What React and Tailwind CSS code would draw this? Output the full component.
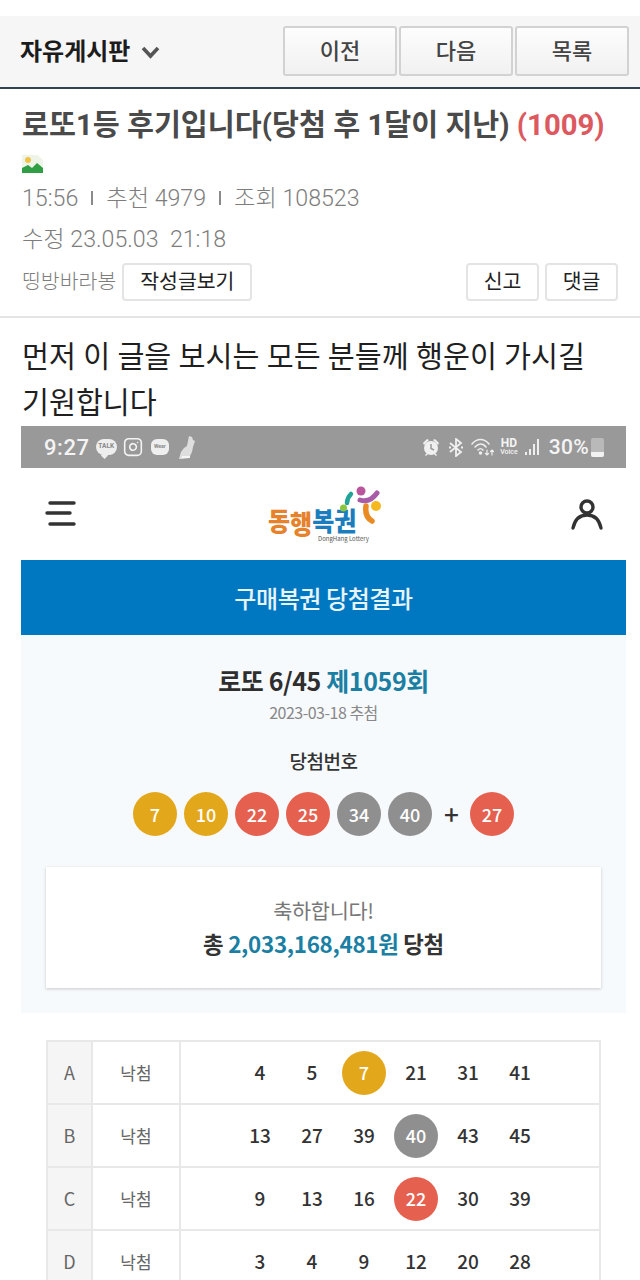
import { Instagram } from 'lucide-react'

const UI_FONT = "font-['Roboto','Noto_Sans_CJK_KR',sans-serif]"
const KR_FONT = "font-['Noto_Sans_CJK_KR','Noto_Sans',sans-serif]"

const BALL = {
  yellow: 'bg-[#e3a71c]',
  red: 'bg-[#e5604f]',
  gray: 'bg-[#8f8f8f]',
}

const WINNING = [
  [7, 'yellow'],
  [10, 'yellow'],
  [22, 'red'],
  [25, 'red'],
  [34, 'gray'],
  [40, 'gray'],
]

const ROWS = [
  { label: 'A', nums: [4, 5, 7, 21, 31, 41], hit: 7, color: 'yellow' },
  { label: 'B', nums: [13, 27, 39, 40, 43, 45], hit: 40, color: 'gray' },
  { label: 'C', nums: [9, 13, 16, 22, 30, 39], hit: 22, color: 'red' },
  { label: 'D', nums: [3, 4, 9, 12, 20, 28] },
]

const Ball = ({ n, color }) => (
  <span className={`flex h-[44px] w-[44px] items-center justify-center rounded-full text-[18px] font-medium text-white ${BALL[color]}`}>
    {n}
  </span>
)

const NavButton = ({ children }) => (
  <button className="h-[50px] w-[114px] rounded-[3px] border-2 border-[#d2d2d2] bg-gradient-to-b from-[#fdfdfd] to-[#f1f1f1] pt-[1px] text-[22px] font-medium text-[#444]">
    {children}
  </button>
)

const SmallButton = ({ children, className = '' }) => (
  <button className={`h-[38px] rounded-[4px] border-2 border-[#e4e4e4] bg-white text-[20.5px] text-[#222] ${className}`}>
    {children}
  </button>
)

const StatusBar = () => (
  <div className="flex h-[42px] items-center bg-[#999999] pl-[23px] pr-[22px] text-[#f4f4f4]">
    <span className="text-[22px] font-medium tracking-[0.6px]">9:27</span>
    <span className="relative ml-[6px] flex h-[16px] w-[21px] items-center justify-center rounded-full bg-[#eeeeee] text-[6.5px] font-bold text-[#888]">
      TALK
      <span className="absolute -bottom-[3px] left-[6px] h-[5px] w-[5px] rotate-45 bg-[#eeeeee]" />
    </span>
    <Instagram size={20} strokeWidth={1.9} className="ml-[6px]" />
    <span className="ml-[8px] flex h-[16px] w-[18px] items-center justify-center rounded-[6px] bg-[#eeeeee] text-[5px] font-bold text-[#888]">Wear</span>
    <svg width="19" height="25" viewBox="0 0 19 25" className="ml-[8px]" fill="#dedede">
      <path d="M12 1l3 1 1 3 2 1-2 6-1 5-3 6-7 1H2l2-7 3-4 3-2z" />
      <path d="M5 22h8" stroke="#f5f5f5" strokeWidth="2" />
    </svg>

    <svg width="18" height="19" viewBox="0 0 18 19" className="ml-auto" fill="#f0f0f0">
      <circle cx="9" cy="10" r="7" />
      <path d="M1 5l4-4 2 1-5 5zM17 5l-4-4-2 1 5 5zM3 17l2-2 1 1-2 2zM15 17l-2-2-1 1 2 2z" />
      <path d="M9 6v4.500l3 1.500" fill="none" stroke="#999" strokeWidth="1.500" />
    </svg>
    <svg width="16" height="19" viewBox="0 0 16 19" className="ml-[8px]" fill="none" stroke="#f0f0f0" strokeWidth="1.800">
      <path d="M2 5l11 9-5 4V1l5 4-11 9" />
      <path d="M1 9.500h2M13 9.500h2" strokeWidth="2.200" />
    </svg>
    <svg width="24" height="20" viewBox="0 0 24 20" className="ml-[7px]" fill="none" stroke="#eeeeee" strokeWidth="1.600" strokeLinecap="round">
      <path d="M1 7c5-6 12-6 17 0" />
      <path d="M4 10c3.500-4 8-4 11 0" />
      <path d="M7 13c2-2 3-2 5 0" />
      <circle cx="9.500" cy="16" r="1" fill="#eeeeee" />
      <path d="M16 13v5M14.500 16.500l1.500 1.500 1.500-1.500M21 18v-5M19.500 14.500l1.500-1.500 1.500 1.500" strokeWidth="1.200" />
    </svg>
    <span className="ml-[5px] flex flex-col items-center text-[12px] font-bold leading-[10px]">
      HD
      <span className="text-[7px] font-medium leading-[8px]">Voice</span>
    </span>
    <svg width="15" height="18" viewBox="0 0 15 18" className="ml-[7px]" fill="#eeeeee">
      <rect x="0" y="14" width="2" height="3" />
      <rect x="4" y="11" width="2" height="6" />
      <rect x="8" y="6" width="2" height="11" />
      <rect x="12" y="1" width="2" height="16" />
    </svg>
    <span className="ml-[9px] text-[21px] font-medium leading-none tracking-[0.3px]">30%</span>
    <span className="relative ml-[2px] mt-[1px] h-[19px] w-[13px] rounded-[2px] bg-[#b9b9b9]">
      <span className="absolute inset-x-0 bottom-0 h-[5px] rounded-b-[2px] bg-[#f2f2f2]" />
    </span>
  </div>
)

const LogoMark = () => (
  <svg width="42" height="40" viewBox="0 0 42 40" className="absolute right-0 top-[2px]" fill="none" strokeLinecap="round">
    <circle cx="21" cy="6" r="4.500" fill="#b9559c" />
    <path d="M20 15c6 2 12 0 17-7" stroke="#a85ba6" strokeWidth="5" />
    <path d="M11 9c-3 3-4 5-4 9" stroke="#22a39a" strokeWidth="4.500" />
    <circle cx="3.500" cy="23" r="3.500" fill="#8cc63f" />
    <circle cx="36" cy="21" r="5" fill="#f5b81f" />
    <path d="M26 21c-1 7 1 12 6 15" stroke="#e98a23" strokeWidth="5.500" />
  </svg>
)

const TopNav = () => (
  <div className="flex h-[92px] items-center justify-between bg-white pl-[24px] pr-[22px]">
    <svg width="32" height="30" viewBox="0 0 32 30" stroke="#333" strokeWidth="3.400" strokeLinecap="round">
      <path d="M5 4h24" />
      <path d="M2 14h23" />
      <path d="M5 25h24" />
    </svg>
    <div className={`relative ml-[3px] h-[62px] w-[114px] ${KR_FONT}`}>
      <div className="absolute left-0 top-[23px] flex items-start text-[24px] font-black leading-[26px]">
        <span className="origin-top scale-y-[1.1] text-[#e5822b]">동</span>
        <span className="mt-[3px] origin-top scale-y-[1.1] text-[#e5822b]">행</span>
        <span className="origin-top scale-y-[1.1] text-[#1b7dbd]">복</span>
        <span className="origin-top scale-y-[1.1] text-[#1b7dbd]">권</span>
      </div>
      <span className="absolute left-[50px] top-[52px] whitespace-nowrap text-[6px] leading-[8px] text-[#555]">DongHang Lottery</span>
      <LogoMark />
    </div>
    <svg width="34" height="34" viewBox="0 0 34 34" fill="none" stroke="#333" strokeWidth="3.400" strokeLinecap="round">
      <circle cx="17" cy="10" r="6" />
      <path d="M3 31c2-9 7-13 14-13s12 4 14 13" />
    </svg>
  </div>
)

const ResultSummary = () => (
  <div className={`flex h-[378px] flex-col items-center bg-[#f7fafd] px-[25px] ${KR_FONT}`}>
    <div className="mt-[26px] text-[25px] font-bold leading-[38px] tracking-[-0.4px] text-[#2e2e2e]">
      로또 6/45 <span className="text-[#1b7fa3]">제1059회</span>
    </div>
    <div className="mt-[2px] text-[16px] leading-[22px] tracking-[-0.5px] text-[#888]">2023-03-18 추첨</div>
    <div className="mt-[23px] text-[19px] font-medium leading-[30px] tracking-[-0.5px] text-[#333]">당첨번호</div>
    <div className="mt-[16px] flex items-center">
      <div className="flex gap-[7px]">
        {WINNING.map(([n, color]) => <Ball key={n} n={n} color={color} />)}
      </div>
      <span className="mx-[12px] w-[14px] text-center text-[26px] font-medium leading-none text-[#333]">+</span>
      <Ball n={27} color="red" />
    </div>
    <div className="mt-[31px] flex h-[121px] w-full flex-col items-center justify-center bg-white pb-[1px] shadow-[0_1px_3px_rgba(0,0,0,0.2)]">
      <div className="text-[20.8px] leading-[32px] tracking-[-0.3px] text-[#777]">축하합니다!</div>
      <div className="text-[22.4px] font-bold leading-[34px] tracking-[-0.3px] text-[#333]">
        총 <span className="text-[#1b7fa3]">2,033,168,481원</span> 당첨
      </div>
    </div>
  </div>
)

const ResultTable = () => (
  <div className={`mx-[25px] mt-[27px] border-l-2 border-r-2 border-t-2 border-[#e8e8e8] ${KR_FONT}`}>
    {ROWS.map(row => (
      <div key={row.label} className="flex h-[63px] border-b-2 border-[#e8e8e8]">
        <div className="flex w-[43px] items-center justify-center bg-[#f5f5f5] text-[18px] text-[#666]">{row.label}</div>
        <div className="flex w-[90px] items-center justify-center border-l-2 border-r-2 border-[#e8e8e8] text-[17px] text-[#666]">낙첨</div>
        <div className="flex flex-1 items-center pl-[53px]">
          {row.nums.map(n => (
            <span key={n} className="flex w-[52px] items-center justify-center text-[19px] font-medium text-[#333]">
              {n === row.hit ? <Ball n={n} color={row.color} /> : n}
            </span>
          ))}
        </div>
      </div>
    ))}
  </div>
)

export default function App() {
  return (
    <div className={`h-[1280px] overflow-hidden bg-white ${UI_FONT}`}>
      <div className="h-[16px]" />
      <header className="flex h-[73px] items-center justify-between border-b-2 border-[#2e4354] bg-[#f6f6f6] pl-[20px] pr-[11px]">
        <div className="flex items-center">
          <span className="text-[24px] font-bold text-[#1c1c1c]">자유게시판</span>
          <svg width="19" height="13" viewBox="0 0 19 13" className="ml-[11px] mt-[2px]" fill="none" stroke="#555" strokeWidth="3.600">
            <path d="M2 2l7.500 8 7.500-8" />
          </svg>
        </div>
        <div className="flex gap-[2px] -mt-[2px]">
          <NavButton>이전</NavButton>
          <NavButton>다음</NavButton>
          <NavButton>목록</NavButton>
        </div>
      </header>

      <section className="border-b-2 border-[#e4e4e4] px-[22px] pb-[15px]">
        <h1 className="mt-[16px] whitespace-nowrap text-[29.3px] font-bold leading-[40px] text-[#4a4a4a]">
          로또1등 후기입니다(당첨 후 1달이 지난) <span className="text-[#dc5a5f]">(1009)</span>
        </h1>
        <svg width="21" height="18" viewBox="0 0 21 18" className="mt-[10px]">
          <path d="M0 0h16l5 5v13H0z" fill="#eef5e8" />
          <circle cx="6" cy="5" r="3" fill="#eec34a" />
          <path d="M0 18v-5l6-3 4 3 5-5 6 5v5z" fill="#2f9e44" />
        </svg>
        <div className="mt-[9px] flex items-center text-[23.2px] font-light leading-[32px] text-[#7d7d7d]">
          15:56
          <span className="mx-[13px] h-[14px] w-[2px] bg-[#8a8a8a]" />
          추천 4979
          <span className="mx-[13px] h-[14px] w-[2px] bg-[#8a8a8a]" />
          조회 108523
        </div>
        <div className="mt-[9px] whitespace-pre text-[23.2px] font-light leading-[32px] text-[#7d7d7d]">수정 23.05.03  21:18</div>
        <div className="mt-[8px] flex items-center">
          <span className="text-[20.5px] font-light text-[#7d7d7d]">띵방바라봉</span>
          <SmallButton className="ml-[6px] w-[130px]">작성글보기</SmallButton>
          <SmallButton className="ml-auto w-[73px]">신고</SmallButton>
          <SmallButton className="ml-[6px] w-[73px]">댓글</SmallButton>
        </div>
      </section>

      <p className="mx-[22px] mt-[16px] whitespace-nowrap text-[29.3px] leading-[46px] text-[#1f1f1f]">
        먼저 이 글을 보시는 모든 분들께 행운이 가시길
        <br />
        기원합니다
      </p>

      <div className="mx-[21px] w-[605px]">
        <StatusBar />
        <TopNav />
        <div className={`flex h-[75px] items-center justify-center bg-[#0078c1] text-[24px] font-medium tracking-[-0.4px] text-[#e8f4fb] ${KR_FONT}`}>
          구매복권 당첨결과
        </div>
        <ResultSummary />
        <ResultTable />
      </div>
    </div>
  )
}
